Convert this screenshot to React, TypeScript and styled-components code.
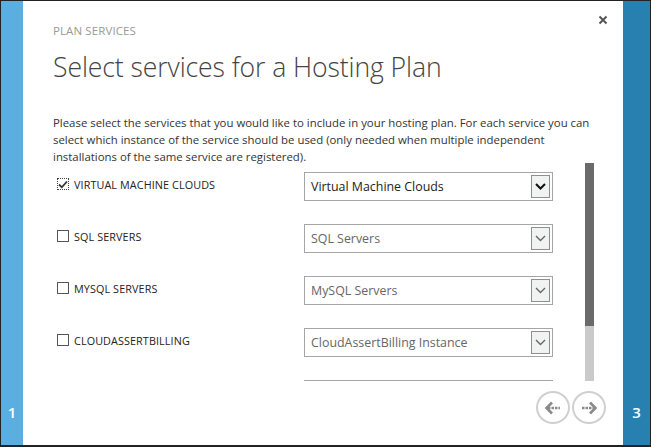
import React from 'react';
import styled, {createGlobalStyle} from 'styled-components';

const Global = createGlobalStyle`
  html, body { margin: 0; padding: 0; background: #222; }
  body { font-family: "Open Sans", "Liberation Sans", sans-serif; }
`

const Frame = styled.div`
  width: 651px;
  height: 447px;
  box-sizing: border-box;
  padding: 1px 1px 2px 1px;
  background: #222;
  display: flex;
`
const SidePanel = styled.div<{ $color: string; $w: number }>`
  width: ${p => p.$w}px;
  background: ${p => p.$color};
  display: flex;
  flex-direction: column;
  justify-content: flex-end;
  align-items: center;
  padding-bottom: 23px;
  box-sizing: border-box;
  color: #fff;
  font-size: 15px;
  font-weight: 600;
`
const Main = styled.div`
  flex: 1;
  background: #fff;
  display: flex;
  flex-direction: column;
  padding: 0 0 0 30px;
  box-sizing: border-box;
`
const TopBar = styled.div`
  display: flex;
  justify-content: space-between;
  align-items: flex-start;
  padding: 22px 15px 0 0;
`
const Kicker = styled.div`
  font-size: 11.5px;
  color: #999;
  letter-spacing: 0.1px;
`
const Close = styled.button`
  border: none;
  background: none;
  padding: 0;
  width: 10px;
  height: 10px;
  display: flex;
  margin-top: -8px;
  cursor: pointer;
`
const Title = styled.h1`
  margin: 11px 0 0;
  font-size: 26.6px;
  font-weight: 300;
  color: #444;
  letter-spacing: -0.1px;
`
const Intro = styled.p`
  margin: 29px 33px 0 0;
  font-size: 11.4px;
  line-height: 17px;
  color: #333;
`
const Body = styled.div`
  display: flex;
  margin-top: -2px;
`
const List = styled.div`
  height: 218px;
  overflow: hidden;
  width: 516px;
`
const Row = styled.div`
  height: 52px;
  padding-top: 9px;
  box-sizing: border-box;
  display: flex;
  align-items: flex-start;
`
const Check = styled.label`
  width: 247px;
  height: 29px;
  display: flex;
  align-items: center;
  gap: 5px;
  padding-left: 4px;
  font-size: 10.8px;
  color: #222;
  letter-spacing: 0.1px;
  margin-top: -2px;
`
const Box = styled.span<{ $focus?: boolean }>`
  width: 12px;
  height: 12px;
  box-sizing: border-box;
  border: 1px ${p => (p.$focus ? 'dotted #444' : 'solid #555')};
  display: flex;
  align-items: center;
  justify-content: center;
  margin-top: -1px;
`
const Select = styled.div<{ $active?: boolean }>`
  width: 249px;
  height: 29px;
  box-sizing: border-box;
  border: 1px solid #a6a6a6;
  display: flex;
  align-items: center;
  justify-content: space-between;
  padding: 0 2px 0 6px;
  font-size: 12.4px;
  color: ${p => (p.$active ? '#222' : '#666')};
`
const Arrow = styled.span`
  width: 19px;
  height: 23px;
  box-sizing: border-box;
  border: 1px solid #8f8f8f;
  background: #f1f3f3;
  display: flex;
  align-items: center;
  justify-content: center;
`
const Scroll = styled.div`
  width: 9px;
  height: 218px;
  margin-left: 16px;
  background: #cacaca;
  display: flex;
  flex-direction: column;
`
const Thumb = styled.div`
  height: 163px;
  background: #6a6a6a;
`
const Footer = styled.div`
  display: flex;
  justify-content: flex-end;
  gap: 2px;
  padding: 10px 17px 0 0;
`
const NavButton = styled.button`
  width: 34px;
  height: 33px;
  border-radius: 50%;
  border: 2px solid #cfcfcf;
  background: #fff;
  display: flex;
  align-items: center;
  justify-content: center;
  padding: 0;
`

const services = [
  {label: 'VIRTUAL MACHINE CLOUDS', value: 'Virtual Machine Clouds', on: true},
  {label: 'SQL SERVERS', value: 'SQL Servers', on: false},
  {label: 'MYSQL SERVERS', value: 'MySQL Servers', on: false},
  {label: 'CLOUDASSERTBILLING', value: 'CloudAssertBilling Instance', on: false},
  // next row is scrolled out of view, only its top edge shows
  {label: '', value: '', on: false},
]

function Chevron({dark}: { dark: boolean }) {
  return (
    <svg width="11" height="7" viewBox="0 0 11 7">
      <path d="M1 1l4.5 4.5L10 1" fill="none" stroke={dark ? '#111' : '#666'} strokeWidth={dark ? 2 : 1.4}/>
    </svg>
  )
}

function Tick() {
  return (
    <svg width="10" height="9" viewBox="0 0 10 9">
      <path d="M1 4.5l2.8 2.8L9 1.5" fill="none" stroke="#333" strokeWidth="1.8"/>
    </svg>
  )
}

function NavArrow({dir}: { dir: 'left' | 'right' }) {
  const head = dir === 'left' ? 'M8 3.5L2.5 9 8 14.5' : 'M10 3.5L15.5 9 10 14.5'
  const shaft = dir === 'left' ? 'M4 9h12' : 'M2 9h12'
  return (
    <svg width="18" height="18" viewBox="0 0 18 18">
      <path d={shaft} fill="none" stroke="#8a8a8a" strokeWidth="2.6" strokeDasharray="2.5 1"/>
      <path d={head} fill="none" stroke="#8a8a8a" strokeWidth="2.6"/>
    </svg>
  )
}

function App() {
  return (
    <Frame>
      <Global/>
      <SidePanel $color="#5aafe0" $w={22}>1</SidePanel>
      <Main>
        <TopBar>
          <Kicker>PLAN SERVICES</Kicker>
          <Close aria-label="close">
            <svg width="10" height="10" viewBox="0 0 10 10">
              <path d="M1.5 1.5l7 7M8.5 1.5l-7 7" stroke="#555" strokeWidth="2"/>
            </svg>
          </Close>
        </TopBar>
        <Title>Select services for a Hosting Plan</Title>
        <Intro>
          Please select the services that you would like to include in your hosting plan. For each service you can
          select which instance of the service should be used (only needed when multiple independent
          installations of the same service are registered).
        </Intro>
        <Body>
          <List>
            {services.map((s, i) =>
              <Row key={i}>
                <Check>
                  {s.label && <Box $focus={s.on}>{s.on && <Tick/>}</Box>}
                  {s.label}
                </Check>
                <Select $active={s.on}>
                  <span>{s.value}</span>
                  <Arrow><Chevron dark={s.on}/></Arrow>
                </Select>
              </Row>
            )}
          </List>
          <Scroll><Thumb/></Scroll>
        </Body>
        <Footer>
          <NavButton aria-label="back"><NavArrow dir="left"/></NavButton>
          <NavButton aria-label="next"><NavArrow dir="right"/></NavButton>
        </Footer>
      </Main>
      <SidePanel $color="#2780b0" $w={27}>3</SidePanel>
    </Frame>
  );
}
export default App
